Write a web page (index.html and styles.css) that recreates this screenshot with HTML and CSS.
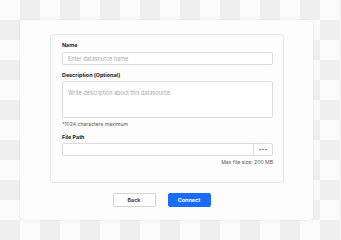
FILE: index.html
```html
<!DOCTYPE html>
<html lang="en">
<head>
<meta charset="utf-8">
<title>New datasource</title>
<link rel="stylesheet" href="styles.css">
</head>
<body>
<div class="card">
  <div class="panel">
    <label class="label">Name</label>
    <div class="input"><span class="placeholder">Enter datasource name</span></div>
    <label class="label label-gap">Description (Optional)</label>
    <div class="textarea"><span class="placeholder">Write description about this datasource</span></div>
    <div class="hint">*1024 characters maximum</div>
    <label class="label label-gap2">File Path</label>
    <div class="file-row">
      <div class="file-input"></div>
      <div class="browse">
        <svg width="8" height="3" viewBox="0 0 8 3"><circle cx="1" cy="1.5" r="0.7" fill="#444"/><circle cx="4" cy="1.5" r="0.7" fill="#444"/><circle cx="7" cy="1.5" r="0.7" fill="#444"/></svg>
      </div>
    </div>
    <div class="max">Max file size: 200 MB</div>
  </div>
  <div class="actions">
    <button class="btn btn-back">Back</button>
    <button class="btn btn-connect">Connect</button>
  </div>
</div>
</body>
</html>
```
FILE: styles.css
```css
html, body {
  margin: 0;
  padding: 0;
}
body {
  width: 341px;
  height: 240px;
  overflow: hidden;
  font-family: Inter, "Liberation Sans", sans-serif;
  background: conic-gradient(#efefef 0 25%, #fafafa 0 50%, #efefef 0 75%, #fafafa 0) 0 0 / 40px 40px;
  padding-top: 20px;
  box-sizing: border-box;
}
.card {
  margin-left: 20px;
  width: 293px;
  height: 200px;
  box-sizing: border-box;
  background: #fdfdfd;
  border-radius: 4px;
  box-shadow: 0 0 2px rgba(120, 130, 160, 0.2);
  padding: 14px 29px 0 30px;
}
.panel {
  height: 149px;
  box-sizing: border-box;
  border: 1px solid #e6e6e6;
  border-radius: 3px;
  padding: 6px 10px 0 11px;
  display: flex;
  flex-direction: column;
}
.label {
  display: block;
  font-size: 5.4px;
  font-weight: 700;
  line-height: 8px;
  height: 8px;
  color: #222;
}
.label-gap { margin-top: 6px; }
.label-gap2 { margin-top: 5px; }
.input {
  margin-top: 3px;
  height: 13px;
  box-sizing: border-box;
  border: 1px solid #dcdcdc;
  border-radius: 2px;
  background: #fff;
  padding-left: 5px;
  display: flex;
  align-items: center;
}
.placeholder {
  font-size: 5.5px;
  color: #a8a8a8;
}
.textarea {
  margin-top: 2px;
  height: 37px;
  box-sizing: border-box;
  border: 1px solid #dcdcdc;
  border-radius: 2px;
  background: #fff;
  padding: 3px 0 0 5px;
  line-height: 8px;
}
.hint {
  margin-top: 2px;
  font-size: 5.1px;
  line-height: 8px;
  color: #555;
}
.file-row {
  margin-top: 2px;
  height: 13px;
  display: flex;
}
.file-input {
  flex: 1;
  box-sizing: border-box;
  border: 1px solid #dcdcdc;
  border-right: none;
  border-radius: 2px 0 0 2px;
  background: #fff;
}
.browse {
  width: 20px;
  box-sizing: border-box;
  border: 1px solid #dcdcdc;
  border-radius: 0 2px 2px 0;
  background: #fff;
  display: flex;
  align-items: center;
  justify-content: center;
}
.browse svg { display: block; }
.max {
  margin-top: 2px;
  font-size: 5.1px;
  line-height: 8px;
  color: #555;
  text-align: right;
}
.actions {
  margin-top: 10px;
  display: flex;
  justify-content: center;
  gap: 12px;
  padding-right: 11px;
}
.btn {
  width: 43px;
  height: 14px;
  box-sizing: border-box;
  border-radius: 2px;
  font-family: Inter, "Liberation Sans", sans-serif;
  font-size: 5.4px;
  font-weight: 700;
  padding: 0;
  line-height: 12px;
}
.btn-back {
  background: #fff;
  border: 1px solid #d4d4d4;
  color: #444;
}
.btn-connect {
  background: #1a6cff;
  border: 1px solid #1a6cff;
  color: #fff;
}
```
